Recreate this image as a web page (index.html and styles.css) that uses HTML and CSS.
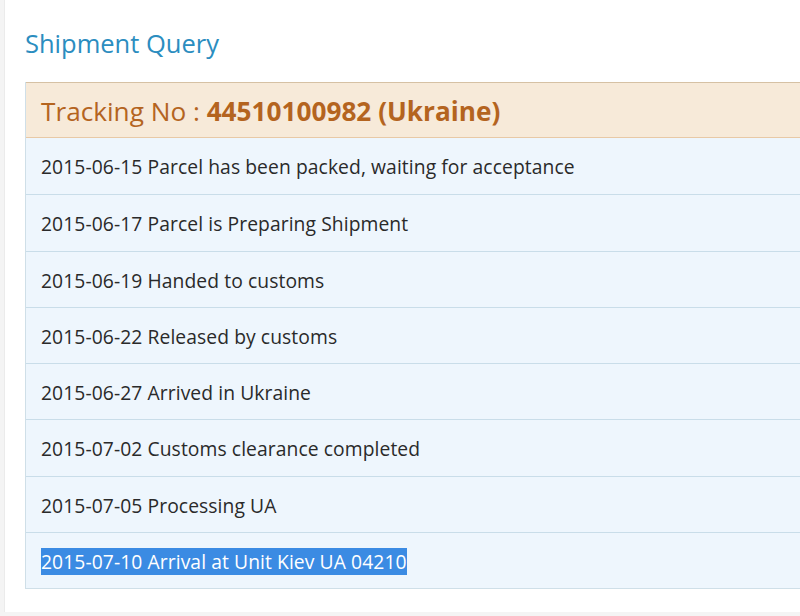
FILE: index.html
```html
<!DOCTYPE html>
<html>
<head>
<meta charset="utf-8">
<link rel="stylesheet" href="styles.css">
</head>
<body>
<div class="page">
  <h1 class="title">Shipment Query</h1>
  <div class="panel">
    <div class="panel-head">Tracking No : <b>44510100982 (Ukraine)</b></div>
    <div class="row">2015-06-15 Parcel has been packed, waiting for acceptance</div>
    <div class="row">2015-06-17 Parcel is Preparing Shipment</div>
    <div class="row">2015-06-19 Handed to customs</div>
    <div class="row">2015-06-22 Released by customs</div>
    <div class="row">2015-06-27 Arrived in Ukraine</div>
    <div class="row">2015-07-02 Customs clearance completed</div>
    <div class="row">2015-07-05 Processing UA</div>
    <div class="row"><span class="sel">2015-07-10 Arrival at Unit Kiev UA 04210</span></div>
  </div>
</div>
</body>
</html>
```
FILE: styles.css
```css
html, body {
  margin: 0;
  padding: 0;
  overflow: hidden;
  background: #f4f4f4;
  font-family: "Open Sans", "Noto Sans", sans-serif;
}
.page {
  height: 612px;
  margin-left: 4px;
  border-left: 1px solid #ebebeb;
  background: #ffffff;
  padding: 27px 0 0 20px;
  box-sizing: border-box;
  width: 900px;
  overflow: hidden;
}
.title {
  margin: 0;
  font-size: 25.5px;
  font-weight: normal;
  color: #2b8dbf;
  line-height: 32px;
}
.panel {
  margin-top: 23px;
  width: 860px;
  border: 1px solid #cfdfe8;
  border-top: none;
}
.panel-head {
  background: #f7ead9;
  border-top: 1px solid #d6c1a4;
  border-bottom: 1px solid #e8c9a6;
  height: 54px;
  line-height: 56px;
  padding-left: 15px;
  font-size: 26.2px;
  color: #b4641f;
}
.panel-head b {
  font-weight: bold;
}
.row {
  background: #eef6fd;
  border-top: 1px solid #c9dde9;
  height: 55.25px;
  line-height: 57px;
  padding-left: 15px;
  font-size: 19.3px;
  letter-spacing: 0.08px;
  color: #2a2a2a;
}
.panel-head + .row {
  border-top: none;
  height: 56.25px;
}
.sel {
  background: #3b8be3;
  color: #ffffff;
}
```
